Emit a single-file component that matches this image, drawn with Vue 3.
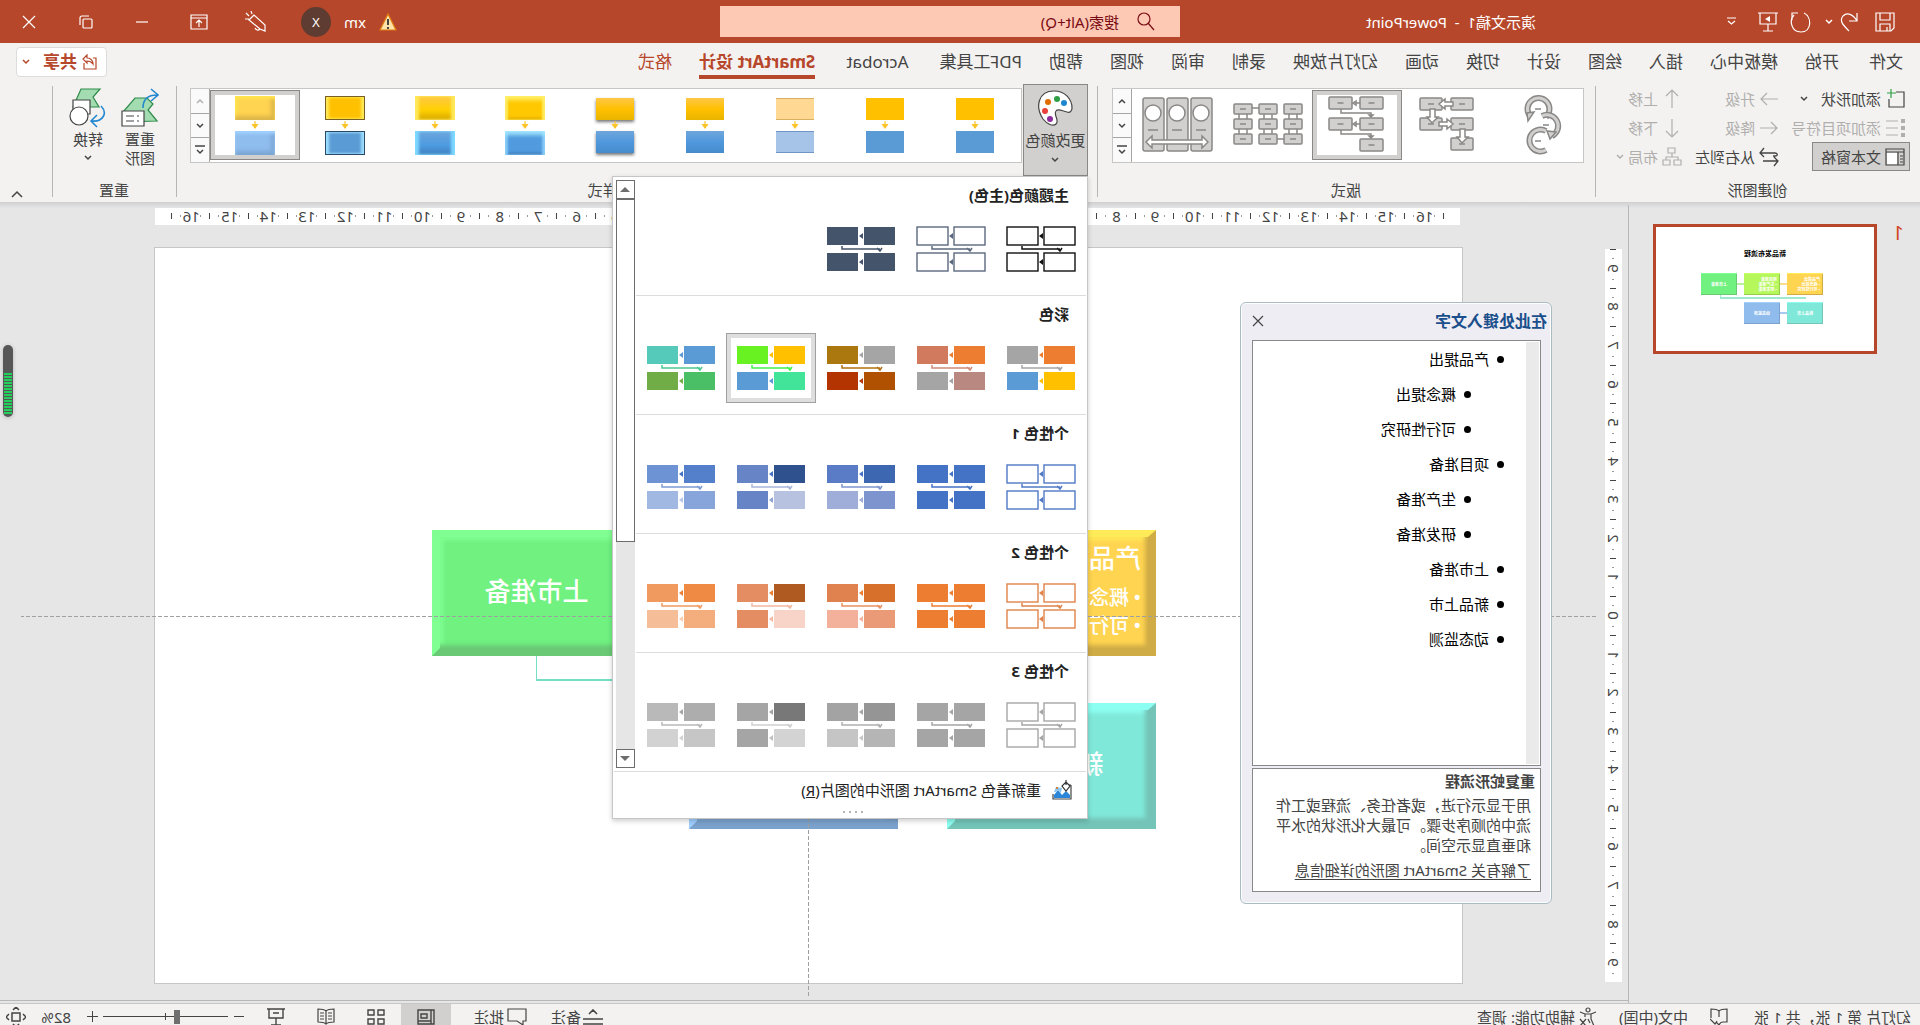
<script setup>
import { h } from 'vue'

const paths = {
  save: [20, 20, '<path d="M1 1h18v18H4l-3-3z M5 1v7h10V1 M5 19v-7h10v7 M8 19v-4"/>'],
  undo: [20, 20, '<path d="M2 1v8h8 M2 9C6 2 12 0 16 4c4 5 0 9-6 15"/>'],
  redo: [22, 22, '<path d="M14 2h6v7 M8 2C0 6 0 21 11 21c10 0 12-12 7-17"/>'],
  show: [20, 20, '<path d="M0 1h20 M2 1v11h16V1 M10 12v7 M5 19h10"/><path d="M8 4v6l5-3z" fill="currentColor" stroke="none"/>'],
  more: [9, 9, '<path d="M0 1h9 M1 4l3.500 3L8 4"/>'],
  down: [8, 6, '<path d="M1 1l3 3 3-3" stroke-width="1.500"/>'],
  up: [8, 6, '<path d="M1 5l3-3 3 3" stroke-width="1.500"/>'],
  drop: [10, 10, '<path d="M0 1h10 M2 5l3 3 3-3" stroke-width="1.500"/>'],
  collapse: [12, 8, '<path d="M1 7l5-5 5 5" stroke-width="1.500"/>'],
  search: [18, 20, '<circle cx="11" cy="7" r="6"/><path d="M7 11l-6 7"/>'],
  warn: [18, 18, '<path d="M9 1l8 16H1z" fill="#fde3a7" stroke="#e07b10"/><path d="M9 6v6 M9 14v2" stroke="#333" stroke-width="1.800"/>'],
  pen: [22, 22, '<path d="M13 4l5 5-11 9-5 2 0-6z M7 18c2 2 4 1 5-1 M15 3l1-3 M18 5l3-3 M18 8l4 0"/>'],
  ribbon: [18, 16, '<path d="M1 1h16v14H1z M1 4h16 M9 13V7 M6 9l3-3 3 3"/>'],
  min: [12, 2, '<path d="M0 1h12"/>'],
  restore: [14, 14, '<rect x="1" y="4" width="9" height="9" rx="1"/><path d="M4 1h7c1 0 2 1 2 2v7"/>'],
  close: [14, 14, '<path d="M1 1l12 12 M13 1L1 13"/>'],
  share: [15, 16, '<path d="M4 4H1v11h12V9 M4 9c1-4 4-5 6-5V1l4 4-4 4V7C8 7 6 7 4 10z"/>'],
  addShape: [20, 20, '<path d="M9 3H1v15h15v-8"/><path d="M14 0v9 M9 4h9" stroke="#2f9e44"/>'],
  bullets: [20, 20, '<path d="M7 3h12 M7 10h12 M7 17h12"/><path d="M0 1h4v4H0z M0 8h4v4H0z M0 15h4v4H0z" fill="currentColor" stroke="none"/>'],
  pane: [20, 18, '<path d="M1 1h18v16H1z M1 4h18 M7 4v13 M2 8h3 M2 11h3 M2 14h3"/><path d="M8 5h10v11H8z" fill="#fff" stroke="none"/>'],
  right: [20, 20, '<path d="M1 10h17 M12 4l6 6-6 6"/>'],
  left: [20, 20, '<path d="M19 10H2 M8 4l-6 6 6 6"/>'],
  upArrow: [20, 20, '<path d="M10 19V1 M4 7l6-6 6 6"/>'],
  downArrow: [20, 20, '<path d="M10 1v18 M4 13l6 6 6-6"/>'],
  rtl: [20, 20, '<path d="M19 6H4c-3 0-3 3 0 3h2 M15 1l4 5-4 4 M1 14h15 M5 10l-4 4 4 5" stroke-width="1.300"/>'],
  layout: [20, 20, '<path d="M7 1h7v5H7z M1 13h7v5H1z M12 13h7v5h-7z M10 6v4 M4 13v-3h12v3"/>'],
  palette: [36, 37, '<path d="M19 1C8 1 1 9 1 18c0 3 2 5 5 4 5-1 9-4 11-1 3 4-4 9 0 13 3 3 9 0 13-5 8-12 5-28-11-28z" fill="#fff"/><g stroke="none"><circle cx="9" cy="13" r="3" fill="#1e86d0"/><circle cx="16" cy="9" r="3" fill="#2f9e44"/><circle cx="25" cy="12" r="3" fill="#e06c00"/><circle cx="28" cy="21" r="3" fill="#e8403a"/><circle cx="23" cy="29" r="3" fill="#8e2b9e"/></g>'],
  reset: [38, 40, '<path d="M2 33l9-11-5-6 6-6h12l12 14v10z" fill="#a3dcb0" stroke="#2e8b4a"/><path d="M15 23h22v15H15z" fill="#fff"/><path d="M20 28h2 M25 28h8 M20 33h2 M25 33h8"/><path d="M16 20C16 12 12 7 2 7 M8 1L1 7l7 6" stroke="#2488d0" stroke-width="1.600"/>'],
  convert: [38, 40, '<path d="M7 1h19l8 18H8l6-10z" fill="#a3dcb0" stroke="#2e8b4a"/><path d="M17 12h17v14H17z" fill="#fff"/><circle cx="28" cy="28" r="9" fill="#fff"/><path d="M6 18C-1 25 4 34 15 33 M10 27l6 6-6 6" stroke="#2488d0" stroke-width="1.600"/>'],
  recolor: [20, 21, '<path d="M1 6h4 M1 6v14h18v-5" stroke="#444"/><path d="M2 19v-3l4-4 4 4 4-5 4 5v3z" fill="#2a86d8" stroke="none"/><path d="M10 9l6-1 2 5-2 0-2-2-3 3z" fill="#8fc6f0" stroke="none"/><circle cx="15" cy="9" r="1" fill="#e06c00" stroke="none"/><path d="M6 1v5 M2 7l4-4 4 4-4 5z" fill="#fff" stroke="#333"/>'],
  proof: [18, 18, '<path d="M9 3C7 1 4 1 1 1v13h4c2 0 3 1 4 3l3-3 M9 3c2-2 5-2 8-2v9 M9 3v6 M11 13l2 3 5-5"/>'],
  access: [18, 20, '<circle cx="9" cy="3" r="2"/><path d="M1 5l5 2h6l5-2 M6 7v5l-3 7 M12 7v3 M9 12l-2 4 M11 12l6 7 M17 12l-6 7"/>'],
  notes: [20, 16, '<path d="M0 10h20 M0 15h20 M6 5l4-4 4 4" stroke-width="1.600"/>'],
  comment: [20, 18, '<path d="M1 1h18v12h-9l-6 4v-4H1z"/>'],
  normal: [18, 16, '<path d="M1 1h16v14H1z M4 1v14 M4 12h13 M8 5h6v4H8z" stroke-width="1.400"/>'],
  sorter: [18, 16, '<path d="M1 1h6v5H1z M11 1h6v5h-6z M1 10h6v5H1z M11 10h6v5h-6z" stroke-width="1.400"/>'],
  reading: [18, 17, '<path d="M9 3C7 1 4 1 1 1v13c3 0 6 0 8 2 2-2 5-2 8-2V1c-3 0-6 0-8 2z M9 3v13 M3 5h4 M3 8h4 M3 11h4 M11 5h4 M11 8h4 M11 11h4"/>'],
  board: [18, 18, '<path d="M0 1h18 M2 1v9h14V1 M9 10v7 M4 17h10 M6 5h6" stroke-width="1.400"/>'],
  fit: [20, 20, '<path d="M6 6h8v8H6z M7 3l3-3 3 3 M7 17l3 3 3-3 M3 7l-3 3 3 3 M17 7l3 3-3 3" stroke-width="1.500"/>'],
  x: [12, 12, '<path d="M1 1l10 10 M11 1L1 11" stroke-width="1.200"/>'],
}

const Icon = ({ name }) => {
  const [w, ht, inner] = paths[name]
  return h('svg', {
    width: w, height: ht, viewBox: `0 0 ${w} ${ht}`, fill: 'none',
    stroke: 'currentColor', 'stroke-width': 1.2, 'aria-hidden': 'true', innerHTML: inner,
  })
}
Icon.props = ['name']

const tabs = ['开始', '模板中心', '插入', '绘图', '设计', '切换', '动画', '幻灯片放映', '录制', '审阅', '视图', '帮助', 'PDF工具集']

const box = (x, y, w = 22, b = 12) =>
  `<rect x="${x}" y="${y}" width="${w}" height="${b}" rx="1"/><path d="M${x + w / 2 - 3} ${y + b / 2}h6"/>`
const card = (x) => `<rect x="${x}" y="8" width="21" height="53" rx="2"/><circle cx="${x + 11}" cy="23" r="8" fill="#fff"/><path d="M${x + 6} 40h10"/>`
const layouts = [
  '<g fill="none"><path d="M52 26A11 11 0 1 0 36 27" stroke-width="6"/><path d="M52 26A11 11 0 1 0 36 27" stroke="#d2d0ce" stroke-width="3"/><path d="M40 26A11 11 0 0 0 30 46" stroke-width="6"/><path d="M40 26A11 11 0 0 0 30 46" stroke="#d2d0ce" stroke-width="3"/><path d="M36 60A11 11 0 1 0 36 41" stroke-width="6"/><path d="M36 60A11 11 0 1 0 36 41" stroke="#d2d0ce" stroke-width="3"/><path d="M41 19h6 M33 35h6 M41 51h6"/></g><path d="M48 22l7 1-1 8z M26 42l9-1-3 8z"/>',
  box(19, 8) + box(50, 8) + box(19, 28) + box(50, 28) + box(19, 48) +
    '<g fill="#fff"><path d="M39 12h8V9l6 5-6 5v-3h-8z M53 32h-8v-3l-6 5 6 5v-3h8z M57 19v8h-3l6 6 5-6h-3v-8z M27 39v8h-3l6 6 5-6h-3v-8z"/></g>',
  box(19, 7, 23) + box(50, 7, 23) + box(19, 28, 23) + box(50, 28, 23) + box(19, 49, 23) +
    '<path d="M42 13h7 M61 19v4H31v4 M42 34h7 M61 40v4H31v4" fill="none"/><path d="M46 11l3 2-3 2z M46 32l3 2-3 2z M29 25h4l-2 2z M29 46h4l-2 2z"/>',
  [10, 35, 60].map((x) => box(x, 14, 18, 10) + box(x, 29, 18, 10) + box(x, 44, 18, 10) + `<path d="M${x + 5} 24v5 M${x + 13} 24v5 M${x + 5} 39v5 M${x + 13} 39v5"/>`).join('') +
    '<path d="M28 49h7 M53 18h7" fill="none"/>',
  card(10) + card(34) + card(58) + '<path d="M14 52l6-6v4h50v-4l6 6-6 6v-4H20v4z" fill="#fff"/>',
]

const styles = ['flat', 'flat', 'subtle', 'moderate', 'intense', 'polished', 'inset', 'cartoon', 'powder']

const t = (a, b, c, d, ab = a, conn = b, cd = c) => ({ f: [a, b, c, d], ab, conn, cd })
const line = (c) => ({ f: ['#fff', '#fff', '#fff', '#fff'], s: c, ab: c, conn: c, cd: c })
const sections = [
  { title: '主题颜色(主色)', items: [line('#111'), line('#5b697e'), t('#44546a', '#44546a', '#44546a', '#44546a')] },
  {
    title: '彩色', items: [
      t('#ed7d31', '#a5a5a5', '#ffc000', '#5b9bd5'),
      t('#ed7d31', '#d27a5e', '#b98880', '#a5a5a5', '#ed7d31', '#d08b7b', '#a5a5a5'),
      t('#a5a5a5', '#ab780f', '#b05102', '#b43401', '#a5a5a5', '#b27110', '#b43a0a'),
      { ...t('#ffc000', '#68f222', '#42e49a', '#5b9bd5', '#ffc000', '#42f24a', '#5b9bd5'), on: true },
      t('#5b9bd5', '#55caba', '#4bbf66', '#70ad47', '#5b9bd5', '#4cc990', '#70ad47'),
    ],
  },
  {
    title: '个性色 1', items: [
      line('#4f79c6'), t('#4472c4', '#4472c4', '#4472c4', '#4472c4'),
      t('#3d67b1', '#5a7bc5', '#7d94ce', '#9fadd9', '#4472c4', '#7d94ce', '#9fadd9'),
      t('#2f528f', '#6684c6', '#b7c2e1', '#6684c6', '#4472c4', '#a9b6dc', '#8fa3d3'),
      t('#537fcb', '#6e93d5', '#87a5db', '#a1b8e2', '#4472c4', '#7d9bd5', '#b9c8e8'),
    ],
  },
  {
    title: '个性色 2', items: [
      line('#e08349'), t('#ed7d31', '#ed7d31', '#ed7d31', '#ed7d31'),
      t('#d6702a', '#e0824f', '#eb9a77', '#f3b19b', '#ed7d31', '#e8905f', '#f3b19b'),
      t('#ae5a21', '#e58d62', '#f8d3c7', '#e58d62', '#ed7d31', '#f3b8a0', '#f3b8a0'),
      t('#ef8a44', '#f09a60', '#f4ad7c', '#f6be98', '#ed7d31', '#f09a60', '#f8cfb2'),
    ],
  },
  {
    title: '个性色 3', items: [
      line('#a5a5a5'), t('#a5a5a5', '#a5a5a5', '#a5a5a5', '#a5a5a5'),
      t('#959595', '#a3a3a3', '#b5b5b5', '#c5c5c5', '#a5a5a5', '#b0b0b0', '#c5c5c5'),
      t('#787878', '#a5a5a5', '#d3d3d3', '#a5a5a5', '#a5a5a5', '#cfcfcf', '#c0c0c0'),
      t('#adadad', '#b9b9b9', '#c6c6c6', '#d2d2d2', '#a5a5a5', '#b9b9b9', '#d2d2d2'),
    ],
  },
]

const outline = [
  ['产品提出', 1], ['概念提出', 2], ['可行性研究', 2], ['项目准备', 1], ['生产准备', 2],
  ['研发准备', 2], ['上市准备', 1], ['新品上市', 1], ['动态监测', 1],
]

const hMarks = Array.from({ length: 33 }, (_, i) => Math.abs(i - 16))
const vMarks = Array.from({ length: 19 }, (_, i) => Math.abs(i - 9))

const shapes = [
  { cls: 'amber', title: '产品提出', list: ['概念提出', '可行性研究'] },
  { cls: 'lime', title: '项目准备', list: ['生产准备', '研发准备'] },
  { cls: 'green', title: '上市准备' },
  { cls: 'teal', title: '新品上市' },
  { cls: 'blue', title: '动态监测' },
]
</script>

<template>
  <div class="app">
    <header class="titlebar">
      <div class="quick">
        <button aria-label="保存"><Icon name="save" /></button>
        <button class="undo" aria-label="撤消"><Icon name="undo" /></button>
        <button class="undo-more" aria-label="撤消列表"><Icon name="down" /></button>
        <button class="redo" aria-label="重复"><Icon name="redo" /></button>
        <button class="show" aria-label="从头开始"><Icon name="show" /></button>
        <button class="more" aria-label="自定义"><Icon name="more" /></button>
      </div>
      <div class="doc">演示文稿1&nbsp; -&nbsp; PowerPoint</div>
      <label class="search"><Icon name="search" /><input type="text" placeholder="搜索(Alt+Q)" aria-label="搜索" /></label>
      <div class="account">
        <Icon name="warn" />
        <span>xm</span>
        <span class="avatar">X</span>
      </div>
      <div class="window">
        <button aria-label="绘图"><Icon name="pen" /></button>
        <button aria-label="功能区显示选项"><Icon name="ribbon" /></button>
        <button aria-label="最小化"><Icon name="min" /></button>
        <button aria-label="还原"><Icon name="restore" /></button>
        <button aria-label="关闭"><Icon name="close" /></button>
      </div>
    </header>

    <nav class="tabs">
      <a href="#" class="file">文件</a>
      <a v-for="n in tabs" :key="n" href="#">{{ n }}</a>
      <a href="#" class="latin">Acrobat</a>
      <a href="#" class="latin ctx on">SmartArt 设计</a>
      <a href="#" class="ctx">格式</a>
      <button class="share"><Icon name="share" /><b>共享</b><Icon name="down" /></button>
    </nav>

    <section class="ribbon">
      <div class="group create">
        <div class="cols">
          <div class="col">
            <button class="cmd"><Icon name="addShape" />添加形状<Icon name="down" class="gap" /></button>
            <button class="cmd" disabled><Icon name="bullets" />添加项目符号</button>
            <button class="cmd pressed"><Icon name="pane" />文本窗格</button>
          </div>
          <div class="col two">
            <button class="cmd" disabled><Icon name="right" />升级</button>
            <button class="cmd" disabled><Icon name="left" />降级</button>
            <button class="cmd"><Icon name="rtl" />从右到左</button>
          </div>
          <div class="col three">
            <button class="cmd" disabled><Icon name="upArrow" />上移</button>
            <button class="cmd" disabled><Icon name="downArrow" />下移</button>
            <button class="cmd" disabled><Icon name="layout" />布局<Icon name="down" /></button>
          </div>
        </div>
        <div class="caption">创建图形</div>
      </div>

      <div class="group layouts">
        <div class="gallery">
          <button v-for="(l, i) in layouts" :key="i" class="cell" :class="{ on: i === 2 }" :aria-label="'版式 ' + (i + 1)">
            <svg width="90" height="70" viewBox="0 0 90 70" fill="#d2d0ce" stroke="#8a8886" stroke-width="1.500" v-html="l" />
          </button>
          <div class="spin">
            <button aria-label="上一行"><Icon name="up" /></button>
            <button aria-label="下一行"><Icon name="down" /></button>
            <button aria-label="其他"><Icon name="drop" /></button>
          </div>
        </div>
        <div class="caption">版式</div>
      </div>

      <div class="group looks">
        <div class="row">
          <div class="colour">
            <button class="colour-btn"><Icon name="palette" /><span>更改颜色</span><Icon name="down" /></button>
            <div class="menu">
              <div class="menu-main">
                <div class="sections">
                  <section v-for="s in sections" :key="s.title">
                    <h3>{{ s.title }}</h3>
                    <div class="swatches">
                      <button v-for="(c, i) in s.items" :key="i" :class="{ on: c.on }" :aria-label="s.title + ' ' + (i + 1)">
                        <svg width="70" height="46" viewBox="0 0 70 46">
                          <g v-if="c.s" fill="#fff" :stroke="c.s" stroke-width="1.400">
                            <rect x="1" y="1" width="31" height="18" /><rect x="38" y="1" width="31" height="18" />
                            <rect x="1" y="27" width="31" height="18" /><rect x="38" y="27" width="31" height="18" />
                          </g>
                          <g v-else>
                            <rect x="1" y="1" width="31" height="18" :fill="c.f[0]" /><rect x="38" y="1" width="31" height="18" :fill="c.f[1]" />
                            <rect x="1" y="27" width="31" height="18" :fill="c.f[2]" /><rect x="38" y="27" width="31" height="18" :fill="c.f[3]" />
                          </g>
                          <path d="M33 7l4 3-4 3z" :fill="c.ab" />
                          <path d="M33 33l4 3-4 3z" :fill="c.cd" />
                          <path d="M54 20v3H16 M14 22l2 3 3-3" fill="none" :stroke="c.conn" stroke-width="1.500" />
                        </svg>
                      </button>
                    </div>
                  </section>
                </div>
                <div class="scroll">
                  <button aria-label="向上滚动"><i class="tri up"></i></button>
                  <div class="thumb"></div>
                  <button class="last" aria-label="向下滚动"><i class="tri"></i></button>
                </div>
              </div>
              <button class="recolor"><Icon name="recolor" /><span>重新着色 SmartArt 图形中的图片(<u>R</u>)</span></button>
              <div class="grip"><i></i><i></i><i></i><i></i></div>
            </div>
          </div>
          <div class="gallery">
            <button v-for="(s, i) in styles" :key="i" class="cell look" :class="[s, { on: i === 8 }]" :aria-label="'样式 ' + (i + 1)">
              <i class="a"></i>
              <svg width="10" height="9" viewBox="0 0 10 9"><path d="M5 0v6 M2 3l3 4 3-4" fill="#fcc42c" stroke="#fcc42c" stroke-width="1.200" /></svg>
              <i class="b"></i>
            </button>
            <div class="spin">
              <button disabled aria-label="上一行"><Icon name="up" /></button>
              <button aria-label="下一行"><Icon name="down" /></button>
              <button aria-label="其他"><Icon name="drop" /></button>
            </div>
          </div>
        </div>
        <div class="caption">SmartArt 样式</div>
      </div>

      <div class="group resets">
        <div class="row">
          <button class="big"><Icon name="reset" /><span>重置<br />图形</span></button>
          <button class="big"><Icon name="convert" /><span>转换</span><Icon name="down" /></button>
        </div>
        <div class="caption">重置</div>
      </div>
      <button class="collapse" aria-label="折叠功能区"><Icon name="collapse" /></button>
    </section>

    <main class="body">
      <aside class="slides">
        <span class="num">1</span>
        <div class="mini">
          <h2>新品发布流程</h2>
          <div class="mini-grid">
            <div v-for="s in shapes" :key="s.title" class="mini-box" :class="s.cls">
              <p>{{ s.title }}</p>
              <p v-for="li in s.list" :key="li">• {{ li }}</p>
            </div>
            <i class="link one"></i><i class="link two"></i><i class="link three"></i><i class="elbow"></i>
          </div>
        </div>
      </aside>

      <div class="work">
        <div class="hruler">
          <span v-for="(n, i) in hMarks" :key="i" class="mark">{{ n }}</span>
        </div>
        <div class="vruler">
          <span v-for="(n, i) in vMarks" :key="i" class="vmark"><b>{{ n }}</b></span>
        </div>
        <div class="slide">
          <i class="wire"></i>
          <div v-for="s in shapes" :key="s.title" class="shape" :class="[s.cls, { listed: s.list }]">
            <p>{{ s.title }}</p>
            <ul v-if="s.list"><li v-for="li in s.list" :key="li">{{ li }}</li></ul>
          </div>
        </div>
        <i class="guide across"></i>
        <i class="guide downward"></i>

        <div class="pane">
          <div class="pane-head"><span>在此处键入文字</span><button aria-label="关闭"><Icon name="x" /></button></div>
          <div class="pane-list">
            <ul><li v-for="o in outline" :key="o[0]" :class="{ sub: o[1] === 2 }">{{ o[0] }}</li></ul>
          </div>
          <div class="pane-info">
            <h4>重复蛇形流程</h4>
            <p>用于显示行进，或者任务、流程或工作流中的顺序步骤。可最大化形状的水平和垂直显示空间。</p>
            <a href="#">了解有关 SmartArt 图形的详细信息</a>
          </div>
        </div>
        <div class="meter"><i></i></div>
      </div>
    </main>

    <footer class="status">
      <div class="status-in">
        <span class="pages">幻灯片 第 1 张，共 1 张</span>
        <button class="proof" aria-label="校对"><Icon name="proof" /></button>
        <span class="lang">中文(中国)</span>
        <button class="acc"><Icon name="access" />辅助功能: 调查</button>
        <button class="notes"><Icon name="notes" />备注</button>
        <button class="comments"><Icon name="comment" />批注</button>
        <button class="view on" aria-label="普通视图"><Icon name="normal" /></button>
        <button class="view" aria-label="幻灯片浏览"><Icon name="sorter" /></button>
        <button class="view" aria-label="阅读视图"><Icon name="reading" /></button>
        <button class="view" aria-label="幻灯片放映"><Icon name="board" /></button>
        <button class="step minus" aria-label="缩小"></button>
        <input class="zoom" type="range" min="10" max="190" value="83" aria-label="缩放" />
        <button class="step plus" aria-label="放大"></button>
        <span class="pct">82%</span>
        <button class="fit" aria-label="适应窗口"><Icon name="fit" /></button>
      </div>
    </footer>
  </div>
</template>

<style>
html, body { margin: 0; overflow: hidden; }
</style>

<style scoped>
.app {
  display: flex; flex-direction: column; height: 100vh; overflow: hidden;
  transform: scaleX(-1);
  font: 15px/20px "Noto Sans", "Noto Sans CJK SC", sans-serif;
  color: #444; background: #e6e6e6;
}
.app * { box-sizing: border-box; }
svg { flex: none; display: block; }
button { font: inherit; color: inherit; background: none; border: 0; padding: 0; margin: 0; display: flex; align-items: center; }
a { color: inherit; text-decoration: none; }
h2, h3, h4, p, ul { margin: 0; padding: 0; list-style: none; }

.titlebar { height: 43px; flex: none; background: #b7472a; color: #fff; display: flex; align-items: center; font-size: 15px; }
.quick { display: flex; align-items: center; padding-left: 25px; width: 384px; flex: none; }
.undo { margin-left: 16px; }
.undo-more { margin-left: 6px; }
.redo { margin-left: 13px; }
.show { margin-left: 12px; }
.more { margin-left: 22px; }
.doc { width: 356px; flex: none; white-space: nowrap; }
.search { width: 460px; height: 31px; flex: none; background: #fdc9b5; color: #7a0c14; display: flex; align-items: center; padding-left: 25px; gap: 18px; }
.search input { flex: 1; min-width: 0; border: 0; background: none; outline: 0; padding: 0; font: inherit; color: inherit; }
.search input::placeholder { color: #7a0c14; opacity: 1; }
.account { flex: 1; display: flex; align-items: center; justify-content: flex-end; gap: 13px; }
.avatar { width: 30px; height: 30px; border-radius: 50%; background: #5f3c31; display: grid; place-items: center; font-size: 13px; }
.window { display: flex; align-items: center; justify-content: space-between; width: 257px; margin: 0 14px 0 30px; flex: none; }
.window button { width: 30px; height: 30px; justify-content: center; }

.tabs { height: 41px; flex: none; background: #f3f2f1; display: flex; gap: 27px; padding: 0 16px 0 17px; font-size: 17px; line-height: 24px; white-space: nowrap; }
.tabs a { padding-top: 7px; height: 36px; }
.file { margin-right: 3px; }
.tabs .latin { margin-left: 4px; }
.tabs .ctx { color: #b7472a; }
.tabs .on { font-weight: 700; border-bottom: 4px solid #b7472a; }
.share { margin: 4px 0 0 auto; height: 30px; width: 91px; background: #fff; border: 1px solid #dedcda; border-radius: 4px; color: #b7472a; padding: 0 5px 0 9px; gap: 5px; }
.share svg:last-child { margin-left: auto; }

.ribbon { height: 118px; flex: none; background: #f3f2f1; display: flex; position: relative; z-index: 3; white-space: nowrap; padding-right: 52px; }
.group { position: relative; display: flex; flex-direction: column; justify-content: space-between; padding-bottom: 2px; }
.group::after { content: ""; position: absolute; right: 0; top: 2px; bottom: 5px; width: 1px; background: #b8b6b4; }
.caption { text-align: center; line-height: 20px; }
.create { width: 325px; flex: none; }
.layouts { width: 498px; flex: none; }
.looks { flex: 1; }
.resets { width: 124px; flex: none; }
.cols { display: flex; }
.col { width: 131px; }
.col.two { width: 97px; }
.col.three { width: 97px; }
.cmd { height: 29px; gap: 4px; padding: 0 8px 0 4px; margin-left: 10px; border: 1px solid transparent; }
.two .cmd, .three .cmd { margin-left: 5px; }
.cmd:disabled, .spin button:disabled { color: #b1afad; }
.pressed { background: #d2d0ce; border-color: #8a8886; }
.gap { margin-left: 9px; }

.row { display: flex; }
.looks .row { padding-left: 9px; }
.gallery { display: flex; margin-top: 4px; height: 75px; background: #fff; border: 1px solid #c8c6c4; padding-left: 1px; }
.layouts .gallery { margin-right: 15px; margin-left: 11px; }
.looks .gallery { margin-left: 1px; flex: 1; margin-right: 14px; }
.cell { width: 90px; height: 70px; margin-top: 1px; flex: none; }
.cell.on { outline: 1px solid #8a8886; outline-offset: -1px; box-shadow: inset 0 0 0 5px #d2d0ce; }
.spin { width: 19px; margin-left: auto; display: flex; flex-direction: column; flex: none; }
.spin button { flex: 1; justify-content: center; border-left: 1px solid #a8a6a4; border-bottom: 1px solid #a8a6a4; background: #fafafa; }
.spin button:last-child { border-bottom: 0; }

.look { flex-direction: column; justify-content: center; gap: 1px; }
.look i { width: 38px; height: 22px; background: #ffc000; }
.look .b { background: #5b9bd5; }
.look.subtle .a { background: #ffd894; border: solid #d8b060; border-width: 1px 0; }
.look.subtle .b { background: #a6c3e8; border: solid #6f95c4; border-width: 1px 0; }
.look.moderate .a, .look.intense .a { background: linear-gradient(#ffc847, #ffc000 50%, #e9b500); }
.look.moderate .b, .look.intense .b { background: linear-gradient(#6fa6dc, #5098dc 50%, #468ccc); }
.look.intense i { box-shadow: 0 2px 3px #777; }
.look.polished i, .look.inset i, .look.cartoon i, .look.powder i { height: 24px; width: 40px; }
.look.polished .a { background: #ffc800; box-shadow: inset 0 5px 4px -1px #fff069, inset 3px 0 2px #ffe95a, inset -3px 0 2px #ffe95a, inset 0 -3px 2px #e9b500; }
.look.polished .b { background: #519ade; box-shadow: inset 0 5px 4px -1px #a2e6ff, inset 3px 0 2px #7fc4f4, inset -3px 0 2px #7fc4f4, inset 0 -3px 2px #4688c6; }
.look.inset .a { background: linear-gradient(#ffc847, #ffd000 60%, #d6a600); box-shadow: inset 4px 0 3px #ffe95a, inset -4px 0 3px #ffe95a; }
.look.inset .b { background: linear-gradient(#6fa6dc, #4c9ae0 60%, #3f7fbd); box-shadow: inset 4px 0 3px #7fd8ff, inset -4px 0 3px #7fd8ff; }
.look.cartoon .a { background: #ffc000; border: 1px solid #776020; box-shadow: inset 3px 0 3px #ffe95a, inset -3px 0 3px #ffe95a; }
.look.cartoon .b { background: #5b9bd5; border: 1px solid #2c4a68; box-shadow: inset 3px 0 3px #9ee0ff, inset -3px 0 3px #9ee0ff; }
.look.powder .a { background: #ffd451; box-shadow: inset 0 3px 3px #ffe24e, inset 4px -4px 4px #dcb54b, inset -3px 0 3px #ffe24e; }
.look.powder .b { background: #8fbdee; box-shadow: inset 0 3px 3px #9fd0ff, inset 4px -4px 4px #7ba6d4; }

.colour { position: relative; z-index: 5; width: 65px; flex: none; }
.colour-btn { width: 65px; height: 92px; background: #d2d0ce; border: 1px solid #8a8886; flex-direction: column; padding-top: 5px; }
.colour-btn span { margin: 3px 0 7px; }
.menu { position: absolute; left: 0; top: 92px; width: 476px; background: #fff; border: 1px solid #c6c6c6; box-shadow: 0 2px 5px #0003; height: 643px; padding-left: 1px; color: #222; }
.menu-main { display: flex; height: 595px; border-bottom: 1px solid #dcdcdc; margin-right: 1px; }
.sections { width: 450px; }
.sections section { height: 119px; border-bottom: 1px solid #dcdcdc; }
.sections section:last-child { border-bottom: 0; }
.sections h3 { font-size: 15px; line-height: 20px; padding: 8px 0 9px 17px; font-weight: 700; }
.swatches { display: flex; }
.swatches button { width: 90px; height: 70px; justify-content: center; }
.swatches .on { box-shadow: inset 0 0 0 1px #a0a0a0, inset 0 0 0 5px #dedede; }
.scroll { width: 19px; margin: 3px 0 3px 1px; background: #e6e6e6; display: flex; flex-direction: column; }
.scroll button { height: 19px; border: 1px solid #6d6d6d; background: #fff; justify-content: center; flex: none; }
.scroll .thumb { height: 343px; border: 1px solid #6d6d6d; background: #fff; }
.scroll .last { margin-top: auto; }
.tri { border: 5px solid transparent; border-top-color: #6d6d6d; border-bottom: 0; }
.tri.up { border-top: 0; border-bottom: 5px solid #6d6d6d; }
.recolor { padding: 7px 0 0 14px; gap: 11px; }
.grip { display: flex; gap: 4px; justify-content: center; margin-top: 11px; padding-right: 7px; }
.grip i { width: 2px; height: 2px; background: #b4b4b4; }

.resets .row { padding: 4px 0 0 17px; gap: 14px; }
.big { flex-direction: column; align-items: center; line-height: 19px; width: 38px; }
.big span { margin: 2px 0 6px; }
.collapse { position: absolute; right: 11px; bottom: 4px; }

.body { flex: 1; min-height: 0; display: flex; background: linear-gradient(#cfcfcf, #e6e6e6 6px); }
.slides { width: 292px; flex: none; margin-top: 3px; border-right: 1px solid #b8b8b8; padding: 19px 0 0 16px; display: flex; align-items: flex-start; gap: 16px; }
.num { font-size: 20px; line-height: 26px; color: #d24726; width: 11px; margin-top: -4px; }
.mini { width: 224px; height: 130px; border: 3px solid #b7472a; background: #fff; padding-top: 21px; }
.mini h2 { font-size: 7px; line-height: 12px; text-align: center; color: #000; }
.mini-grid { position: relative; display: grid; grid-template-columns: repeat(3, 36px); gap: 7px; margin: 13px 0 0 51px; }
.mini-box { height: 22px; color: #fff; font-size: 4px; line-height: 5px; display: flex; flex-direction: column; justify-content: center; padding-left: 3px; font-weight: 700; }
.mini-box.green, .mini-box.teal, .mini-box.blue { align-items: center; padding: 0; }
.link { position: absolute; height: 2px; width: 7px; background: #fbdc8c; left: 36px; top: 10px; }
.link.two { left: 79px; background: #b9f0a0; }
.link.three { top: 39px; background: #a7cbf0; }
.elbow { position: absolute; left: 17px; top: 22px; width: 86px; height: 4px; border: solid #9fe9cf; border-width: 0 1px 2px 0; }
.amber { background: #ffd451; --l: #ffeb57; --d: #d0ac47; }
.lime { background: #b6f75c; --l: #c8ff66; --d: #96cc4d; }
.green { background: #70f180; --l: #80ff92; --d: #69c975; }
.teal { background: #80e8d9; --l: #8dfff2; --d: #74c4b8; }
.blue { background: #8fbcec; --l: #9fd0ff; --d: #7ba2cc; }
.mini-box { box-shadow: inset 0 1px var(--l), inset 1px -1px var(--d); }

.work {
  flex: 1; min-width: 0; position: relative; margin-bottom: 2px; border-bottom: 1px solid #b8b8b8;
  padding: 6px 154px 16px 6px; display: grid; grid-template: 17px 1fr / 17px 1fr; gap: 22px 142px;
}
.hruler { grid-column: 2; margin: 0 1px 0 3px; padding: 0 16px; background: #fff; display: flex; line-height: 17px; }
.mark { flex: 1; text-align: center; position: relative; }
.mark::before, .vmark::before { content: ""; position: absolute; background: #444; }
.mark::before { left: 0; top: 5px; width: 1px; height: 6px; }
.mark::after { content: ""; position: absolute; left: 9px; right: 8px; top: 7px; height: 2px; border: solid #999; border-width: 0 1px; }
.mark:last-child { border-right: 1px solid #444; border-image: linear-gradient(transparent 5px, #444 5px 11px, transparent 11px) 1; }
.vruler { grid-column: 1; background: #fff; margin: 2px 0; display: flex; flex-direction: column; }
.vmark { flex: 1; display: grid; place-items: center; position: relative; min-height: 0; }
.vmark b { font-weight: 400; line-height: 17px; transform: rotate(-90deg); }
.vmark::before { top: 0; left: 6px; width: 6px; height: 1px; }
.vmark::after { content: ""; position: absolute; top: 9px; bottom: 8px; left: 8px; width: 2px; border: solid #999; border-width: 1px 0; }
.slide { grid-column: 2; background: #fff; border: 1px solid #c6c6c6; position: relative; }
.shape { position: absolute; width: 209px; height: 126px; color: #fff; font-size: 26px; line-height: 36px; font-weight: 500;
  display: flex; align-items: center; justify-content: center;
  border: solid; border-width: 7px 8px 8px; border-color: var(--l) var(--l) var(--d) var(--d);
  box-shadow: inset 3px -3px 4px var(--d), inset -3px 3px 4px var(--l); padding-bottom: 4px; }
.shape.listed { flex-direction: column; align-items: flex-start; justify-content: flex-start; padding: 3px 0 0 7px; }
.shape ul { font-size: 20px; line-height: 28px; }
.shape li::before { content: "•"; display: inline-block; width: 12px; }
.shape.listed ul { margin-top: 8px; }
.shape.amber { left: 306px; top: 282px; }
.shape.lime { left: 564px; top: 282px; }
.shape.green { left: 821px; top: 282px; }
.shape.teal { left: 306px; top: 455px; }
.shape.blue { left: 564px; top: 455px; }
.wire { position: absolute; left: 410px; top: 407px; width: 516px; height: 26px; border: solid #74dfc3; border-width: 0 1px 2px 0; }
.guide { position: absolute; }
.across { left: 32px; right: 21px; top: 414px; height: 1px; background: repeating-linear-gradient(90deg, #a0a0a0 0 4px, transparent 4px 6px); }
.downward { left: 819px; top: 28px; bottom: 4px; width: 1px; background: repeating-linear-gradient(#a0a0a0 0 4px, transparent 4px 6px); }

.pane { position: absolute; left: 76px; top: 100px; width: 312px; border: 1px solid #a9bcc4; border-radius: 6px; background: #eeedf4; box-shadow: inset 0 0 0 1px #fff; padding: 0 11px 11px 10px; }
.pane-head { height: 37px; display: flex; align-items: center; justify-content: space-between; margin-left: -6px; padding-bottom: 2px; color: #1a4f8b; font-size: 16px; font-weight: 700; }
.pane-head button { color: #444; }
.pane-list { height: 426px; border: 1px solid #888; background: #fff; padding: 1px; display: flex; color: #000; }
.pane-list::before { content: ""; width: 13px; background: #eaeaea; }
.pane-list li { line-height: 35px; padding-left: 22px; display: flex; align-items: center; height: 35px; }
.pane-list li::before { content: ""; width: 7px; height: 7px; border-radius: 50%; background: #000; margin-right: 8px; }
.pane-list li.sub { padding-left: 55px; }
.pane-info { margin-top: 2px; height: 124px; border: 1px solid #888; background: #fff; padding: 2px 0 0 9px; }
.pane-info h4 { font-size: 15px; line-height: 20px; margin-left: -4px; font-weight: 700; }
.pane-info p { margin: 4px 0 5px; width: 260px; }
.pane-info a { text-decoration: underline; text-underline-offset: 3px; }
.meter { position: absolute; right: 3px; top: 143px; width: 10px; height: 72px; border-radius: 5px; background: #575757; padding: 28px 1px 3px; box-shadow: 0 1px 4px #0003; }
.meter i { display: block; height: 100%; background: repeating-linear-gradient(#22d05c 0 2px, #575757 2px 3px); }

.status { height: 22px; flex: none; border-top: 1px solid #c6c6c6; background: #f3f2f1; overflow: hidden; white-space: nowrap; }
.status-in { height: 25px; display: flex; align-items: center; padding: 0 6px 0 9px; }
.pages { width: 183px; }
.proof { width: 40px; }
.lang { width: 91px; }
.acc { gap: 4px; }
.notes { margin-left: auto; gap: 2px; }
.comments { gap: 3px; margin: 0 23px 0 24px; }
.view { width: 50px; height: 25px; justify-content: center; }
.view.on { background: #d2d0ce; }
.step { width: 10px; height: 11px; margin-left: 7px; background: linear-gradient(#444, #444) center / 10px 1px no-repeat; }
.plus { margin-left: 5px; background: linear-gradient(#444, #444) center / 11px 1px no-repeat, linear-gradient(#444, #444) center / 1px 11px no-repeat; width: 11px; }
.zoom { appearance: none; width: 125px; height: 16px; margin: 0 0 0 6px; background: linear-gradient(#444, #444) center / 100% 1px no-repeat, linear-gradient(#444, #444) center / 1px 7px no-repeat; }
.zoom::-webkit-slider-thumb { appearance: none; width: 6px; height: 14px; background: #6f6f6f; }
.pct { margin: 0 15px 0 16px; width: 30px; }
</style>
